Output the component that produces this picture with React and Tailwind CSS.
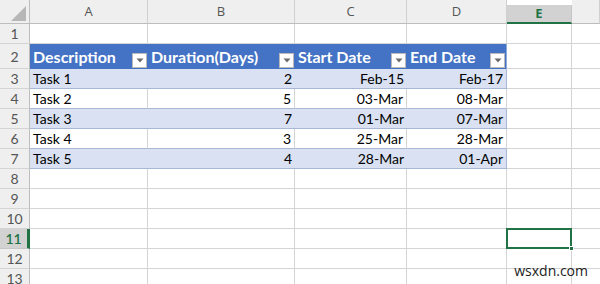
import React from 'react';

const COLS = ['A', 'B', 'C', 'D', 'E', ''];

const TASKS = [
  { name: 'Task 1', days: 2, start: 'Feb-15', end: 'Feb-17' },
  { name: 'Task 2', days: 5, start: '03-Mar', end: '08-Mar' },
  { name: 'Task 3', days: 7, start: '01-Mar', end: '07-Mar' },
  { name: 'Task 4', days: 3, start: '25-Mar', end: '28-Mar' },
  { name: 'Task 5', days: 4, start: '28-Mar', end: '01-Apr' },
];

const HEADERS = ['Description', 'Duration(Days)', 'Start Date', 'End Date'];

// little filter button in the table header
function FilterButton() {
  return (
    <span className="ml-auto mr-[1px] mb-[1px] flex h-[15px] w-[15px] shrink-0 items-center justify-center border border-[#b9b9b9] bg-white">
      <svg width="8" height="5" viewBox="0 0 8 5">
        <path d="M0.5 0.5 L7.5 0.5 L4 4.5 Z" fill="#6b6b6b" />
      </svg>
    </span>
  );
}

function RowHeader({ n, selected }) {
  if (selected) {
    return (
      <div className="flex items-center justify-center border-b border-r-[3px] border-b-[#c6c6c6] border-r-[#217346] bg-[#d2d2d2] text-[14px] font-semibold text-[#217346]">
        {n}
      </div>
    );
  }
  return (
    <div className="flex items-center justify-center border-b border-r border-b-[#d4d4d4] border-r-[#bdbdbd] bg-[#efefef] text-[14px] text-[#555]">
      {n}
    </div>
  );
}

function Blank({ last }) {
  return <div className={last ? 'border-b border-[#d4d4d4]' : 'border-b border-r border-[#d4d4d4]'} />;
}

export default function App() {
  const rows = [];

  // row 1
  rows.push(
    <React.Fragment key="r1">
      <RowHeader n={1} />
      {COLS.map((c, i) => (
        <Blank key={i} last={i === COLS.length - 1} />
      ))}
    </React.Fragment>
  );

  // row 2 - table header
  rows.push(
    <React.Fragment key="r2">
      <RowHeader n={2} />
      {HEADERS.map((h, i) => (
        <div
          key={h}
          className={
            'flex items-end bg-[#4472c4] pl-[3px] text-[16px] font-bold leading-none text-white ' +
            (i === 3 ? 'border-r border-r-[#8ea9db]' : '')
          }
        >
          <span className="mb-[4px] whitespace-nowrap">{h}</span>
          <FilterButton />
        </div>
      ))}
      <Blank />
      <Blank last />
    </React.Fragment>
  );

  TASKS.forEach((t, idx) => {
    const band = idx % 2 === 0;
    const cell = band
      ? 'flex items-center bg-[#d9e1f2] border-b border-b-[#a8b7d6] px-[3px]'
      : 'flex items-center bg-white border-b border-r border-b-[#a8b7d6] border-r-[#d4d4d4] px-[3px]';
    rows.push(
      <React.Fragment key={t.name}>
        <RowHeader n={idx + 3} />
        <div className={cell}>{t.name}</div>
        <div className={cell + ' justify-end'}>{t.days}</div>
        <div className={cell + ' justify-end'}>{t.start}</div>
        <div className={cell + ' justify-end border-r border-r-[#a8b7d6]'}>{t.end}</div>
        <Blank />
        <Blank last />
      </React.Fragment>
    );
  });

  for (let n = 8; n <= 13; n++) {
    const sel = n === 11;
    rows.push(
      <React.Fragment key={'r' + n}>
        <RowHeader n={n} selected={sel} />
        {COLS.map((c, i) =>
          sel && i === 4 ? (
            <div key={i} className="relative -ml-[1px] -mt-[1px] border-2 border-[#217346]">
              <span className="absolute -bottom-[4px] -right-[4px] h-[5px] w-[5px] border border-white bg-[#217346]" />
            </div>
          ) : (
            <Blank key={i} last={i === COLS.length - 1} />
          )
        )}
      </React.Fragment>
    );
  }

  return (
    <div className="relative h-[284px] w-[600px] overflow-hidden bg-white font-['Lato',sans-serif] text-[14px] text-black">
      <div className="grid grid-cols-[30px_118px_147px_112px_100px_65px_28px] grid-rows-[24px_20px_25px_repeat(11,20px)]">
        {/* corner */}
        <div className="flex items-end justify-end border-b border-r border-[#bdbdbd] bg-[#efefef] pb-[2px] pr-[3px]">
          <svg width="15" height="15" viewBox="0 0 15 15">
            <path d="M15 0 L15 15 L0 15 Z" fill="#b7b7b7" />
          </svg>
        </div>
        {COLS.map((c, i) =>
          c === 'E' ? (
            <div
              key={i}
              className="mt-[5px] flex items-center justify-center border-b-2 border-r border-b-[#217346] border-r-[#c6c6c6] bg-[#d2d2d2] font-['Open_Sans',sans-serif] text-[13px] font-bold text-[#217346]"
            >
              {c}
            </div>
          ) : (
            <div
              key={i}
              className="flex items-center justify-center border-b border-r border-b-[#bdbdbd] border-r-[#d0d0d0] bg-[#efefef] font-['Open_Sans',sans-serif] text-[13px] text-[#555]"
            >
              {c}
            </div>
          )
        )}
        {rows}
      </div>
      <span className="absolute bottom-[3px] right-[12px] font-['Open_Sans',sans-serif] text-[14px] text-[#222]">
        wsxdn.com
      </span>
    </div>
  );
}
